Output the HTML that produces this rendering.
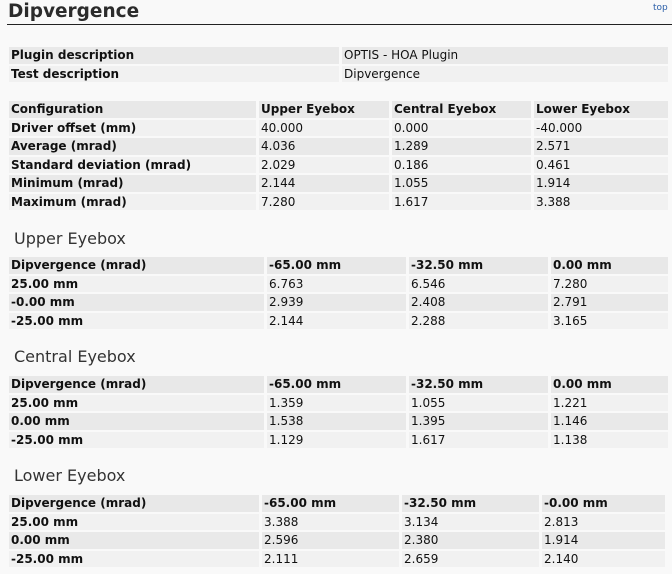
<!DOCTYPE html>
<html><head><style>
body{margin:0;background:#f9f9f9;width:672px;height:574px;overflow:hidden;position:relative;font-family:"DejaVu Sans",Verdana,sans-serif;color:#111;}
h1{position:absolute;left:8px;top:1px;margin:0;font-size:18.5px;font-weight:bold;color:#2b2b2b;}
.line{position:absolute;left:7px;right:0;top:24px;border-top:1.5px solid #222;}
.top{position:absolute;left:653px;top:3px;font-size:9px;color:#2a5ea8;}
table{position:absolute;left:6px;border-collapse:separate;border-spacing:3px 2px;table-layout:fixed;}
td{height:16.5px;padding:0 0 0 2px;font-size:12px;line-height:16px;white-space:nowrap;overflow:hidden;background:#f1f1f1;}
tr.h td{background:#e8e8e8;font-weight:bold;}
tr.a td{background:#e9e9e9;}
tr td:first-child{font-weight:bold;}
h2{position:absolute;left:14px;margin:0;font-size:16px;font-weight:normal;color:#333;}
</style></head><body>
<h1>Dipvergence</h1><div class="line"></div><div class="top">top</div>
<table style="top:45px;width:665px"><col style="width:330px"><col>
<tr class="a"><td>Plugin description</td><td style="font-weight:normal">OPTIS - HOA Plugin</td></tr>
<tr><td>Test description</td><td style="font-weight:normal">Dipvergence</td></tr></table>

<table style="top:99px;width:665px"><col style="width:247px"><col style="width:130px"><col style="width:139px"><col>
<tr class="h"><td>Configuration</td><td>Upper Eyebox</td><td>Central Eyebox</td><td>Lower Eyebox</td></tr>
<tr><td>Driver offset (mm)</td><td>40.000</td><td>0.000</td><td>-40.000</td></tr>
<tr class="a"><td>Average (mrad)</td><td>4.036</td><td>1.289</td><td>2.571</td></tr>
<tr><td>Standard deviation (mrad)</td><td>2.029</td><td>0.186</td><td>0.461</td></tr>
<tr class="a"><td>Minimum (mrad)</td><td>2.144</td><td>1.055</td><td>1.914</td></tr>
<tr><td>Maximum (mrad)</td><td>7.280</td><td>1.617</td><td>3.388</td></tr></table>

<h2 style="top:229px">Upper Eyebox</h2>
<table style="top:255px;width:665px"><col style="width:255px"><col style="width:139px"><col style="width:139px"><col>
<tr class="h"><td>Dipvergence (mrad)</td><td>-65.00 mm</td><td>-32.50 mm</td><td>0.00 mm</td></tr>
<tr><td>25.00 mm</td><td>6.763</td><td>6.546</td><td>7.280</td></tr>
<tr class="a"><td>-0.00 mm</td><td>2.939</td><td>2.408</td><td>2.791</td></tr>
<tr><td>-25.00 mm</td><td>2.144</td><td>2.288</td><td>3.165</td></tr></table>

<h2 style="top:347px">Central Eyebox</h2>
<table style="top:374px;width:665px"><col style="width:255px"><col style="width:139px"><col style="width:139px"><col>
<tr class="h"><td>Dipvergence (mrad)</td><td>-65.00 mm</td><td>-32.50 mm</td><td>0.00 mm</td></tr>
<tr><td>25.00 mm</td><td>1.359</td><td>1.055</td><td>1.221</td></tr>
<tr class="a"><td>0.00 mm</td><td>1.538</td><td>1.395</td><td>1.146</td></tr>
<tr><td>-25.00 mm</td><td>1.129</td><td>1.617</td><td>1.138</td></tr></table>

<h2 style="top:466px">Lower Eyebox</h2>
<table style="top:493px;width:662px"><col style="width:250px"><col style="width:137px"><col style="width:137px"><col>
<tr class="h"><td>Dipvergence (mrad)</td><td>-65.00 mm</td><td>-32.50 mm</td><td>-0.00 mm</td></tr>
<tr><td>25.00 mm</td><td>3.388</td><td>3.134</td><td>2.813</td></tr>
<tr class="a"><td>0.00 mm</td><td>2.596</td><td>2.380</td><td>1.914</td></tr>
<tr><td>-25.00 mm</td><td>2.111</td><td>2.659</td><td>2.140</td></tr></table>
</body></html>
